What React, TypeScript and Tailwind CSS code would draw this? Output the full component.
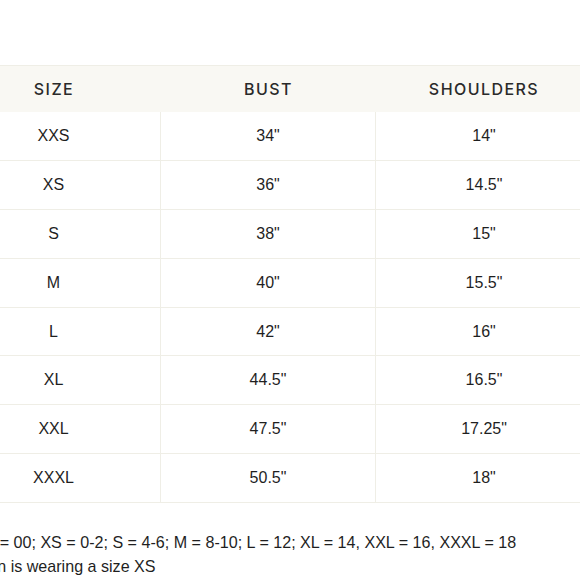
const rows = [
  ['XXS', '34"', '14"'],
  ['XS', '36"', '14.5"'],
  ['S', '38"', '15"'],
  ['M', '40"', '15.5"'],
  ['L', '42"', '16"'],
  ['XL', '44.5"', '16.5"'],
  ['XXL', '47.5"', '17.25"'],
  ['XXXL', '50.5"', '18"'],
];

export default function App() {
  return (
    <div className="w-[580px] h-[580px] overflow-hidden bg-white text-[#1f1f1f] font-['Liberation_Sans',Arial,sans-serif]">
      <div className="ml-[-53px] mt-[65px] w-[645px]">
        <div className="grid grid-cols-[214px_215px_216px] h-[47px] items-center bg-[#f9f8f3] border-t border-[#efeee6] font-['Inter',sans-serif] font-medium text-[16px] tracking-[0.09em] text-[#2a2a2a]">
          <div className="text-center">SIZE</div>
          <div className="text-center">BUST</div>
          <div className="text-center">SHOULDERS</div>
        </div>
        {rows.map((r) => (
          <div key={r[0]} className="grid grid-cols-[214px_215px_216px] h-[48.9px] border-b border-[#efeee6] text-[16px]">
            <div className="flex items-center justify-center border-r border-[#efeee6]">{r[0]}</div>
            <div className="flex items-center justify-center border-r border-[#efeee6]">{r[1]}</div>
            <div className="flex items-center justify-center">{r[2]}</div>
          </div>
        ))}
      </div>
      <div className="mt-[27px] text-[16.1px] leading-[24px] whitespace-nowrap">
        <p className="ml-[-37px]">XXS = 00; XS = 0-2; S = 4-6; M = 8-10; L = 12; XL = 14, XXL = 16, XXXL = 18</p>
        <p className="ml-[-49px]">Woman is wearing a size XS</p>
      </div>
    </div>
  );
}
